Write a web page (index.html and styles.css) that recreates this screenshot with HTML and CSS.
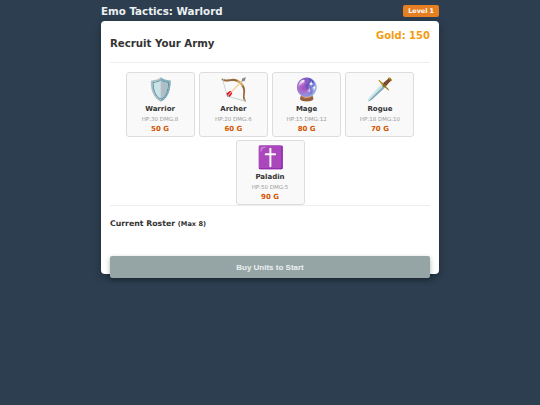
FILE: index.html
```html
<!DOCTYPE html>
<html lang="en">
<head>
  <meta charset="UTF-8">
  <meta name="viewport" content="width=device-width, initial-scale=1.0">
  <title>Emo Tactics: Warlord</title>
  <link rel="stylesheet" href="styles.css">
</head>
<body>
  <div class="game">
    <div class="top-bar">
      <div class="game-title">Emo Tactics: Warlord</div>
      <div class="level">Level 1</div>
    </div>
    <div class="panel">
      <div class="panel-head">
        <h2>Recruit Your Army</h2>
        <div class="gold">Gold: 150</div>
      </div>
      <div class="shop">
        <div class="unit">
          <div class="icon">🛡️</div>
          <div class="name">Warrior</div>
          <div class="stats">HP:30 DMG:8</div>
          <div class="cost">50 G</div>
        </div>
        <div class="unit">
          <div class="icon">🏹</div>
          <div class="name">Archer</div>
          <div class="stats">HP:20 DMG:6</div>
          <div class="cost">60 G</div>
        </div>
        <div class="unit">
          <div class="icon">🔮</div>
          <div class="name">Mage</div>
          <div class="stats">HP:15 DMG:12</div>
          <div class="cost">80 G</div>
        </div>
        <div class="unit">
          <div class="icon">🗡️</div>
          <div class="name">Rogue</div>
          <div class="stats">HP:18 DMG:10</div>
          <div class="cost">70 G</div>
        </div>
        <div class="unit">
          <div class="icon">✝️</div>
          <div class="name">Paladin</div>
          <div class="stats">HP:50 DMG:5</div>
          <div class="cost">90 G</div>
        </div>
      </div>
      <div class="roster">
        <h3>Current Roster <small>(Max 8)</small></h3>
      </div>
      <button class="start">Buy Units to Start</button>
    </div>
  </div>
</body>
</html>
```

FILE: styles.css
```css
* { box-sizing: border-box; }
html, body { margin: 0; height: 100%; }
body { background: #2c3e50; font-family: "DejaVu Sans", sans-serif; color: #333; }
.game { width: 338px; margin: 0 auto; padding-top: 3px; }
.top-bar { display: flex; justify-content: space-between; align-items: center; height: 15px; margin-bottom: 3px; }
.game-title { color: #ecf0f1; font-size: 10.3px; font-weight: bold; }
.level { background: #e67e22; color: #fff; font-size: 6.4px; font-weight: bold; height: 12px; line-height: 12px; padding: 0 5px; border-radius: 2px; }
.panel { background: #fff; border-radius: 4px; height: 253px; padding: 0 9px; box-shadow: 0 3px 8px rgba(0,0,0,0.3); }
.panel-head { display: flex; justify-content: space-between; height: 42px; border-bottom: 1px solid #eee; }
.panel-head h2 { margin: 17px 0 0; font-size: 10.2px; }
.gold { margin-top: 9px; color: #f39c12; font-size: 10px; font-weight: bold; }
.shop { display: flex; flex-wrap: wrap; justify-content: center; gap: 3px 4.3px; margin-top: 9px; border-bottom: 1px solid #eee; }
.unit { width: 69px; height: 65px; background: #f9f9f9; border: 1px solid #ddd; border-radius: 3px; text-align: center; }
.icon { font-size: 22px; line-height: 28px; height: 29px; margin-top: 3px; }
.name { font-size: 7px; font-weight: bold; }
.stats { font-size: 5.5px; color: #999; margin-top: 3px; }
.cost { font-size: 7px; font-weight: bold; color: #d35400; margin-top: 3px; }
.roster h3 { margin: 13px 0 0; font-size: 7.8px; }
.roster small { font-size: 6.6px; }
.start { display: block; width: 100%; height: 22px; margin-top: 28px; background: #95a5a6; color: #ecf0f1; border: none; border-radius: 2px; font-family: "Liberation Sans", Arial, sans-serif; font-size: 8px; font-weight: bold; box-shadow: 0 2px 5px rgba(0,0,0,0.3); }
```
